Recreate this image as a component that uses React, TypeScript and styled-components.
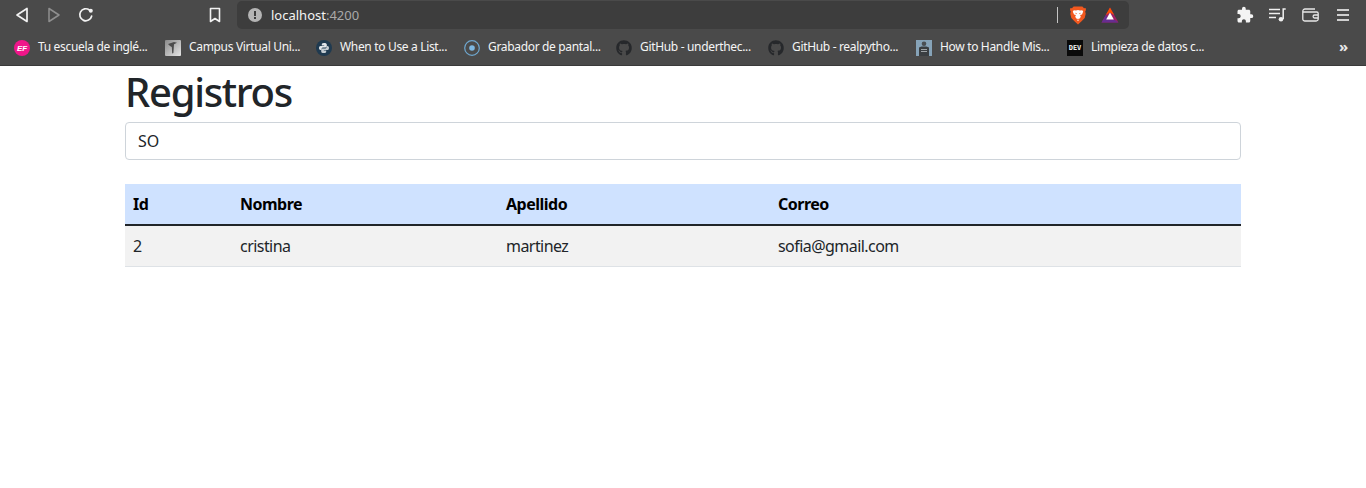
import React from 'react';
import styled, { createGlobalStyle } from 'styled-components';
import { FaGithub } from 'react-icons/fa';
import { MdExtension } from 'react-icons/md';

const GlobalStyle = createGlobalStyle`
    html, body {
        margin: 0;
        padding: 0;
        background: #fff;
    }
    body {
        font-family: "Noto Sans", "Open Sans", sans-serif;
        color: #212529;
    }
`;

const BackIcon = () => (
    <svg width="14" height="16" viewBox="0 0 14 16" fill="none" stroke="currentColor" strokeWidth="1.7" strokeLinejoin="round">
        <path d="M12 1.5v13L2 8z" />
    </svg>
);

const ForwardIcon = () => (
    <svg width="14" height="16" viewBox="0 0 14 16" fill="none" stroke="currentColor" strokeWidth="1.5" strokeLinejoin="round">
        <path d="M2 1.5v13L12 8z" />
    </svg>
);

const ReloadIcon = () => (
    <svg width="16" height="16" viewBox="0 0 16 16" fill="none" stroke="currentColor" strokeWidth="1.7" strokeLinecap="round">
        <path d="M13.6 9.2A6 6 0 1 1 11.4 3" />
        <circle cx="12.8" cy="3.7" r="2" fill="currentColor" stroke="none" />
    </svg>
);

const BookmarkIcon = () => (
    <svg width="12" height="16" viewBox="0 0 12 16" fill="none" stroke="currentColor" strokeWidth="1.6" strokeLinejoin="round">
        <path d="M1.5 1.500h9v13L6 11.500l-4.500 3z" />
    </svg>
);

const AlertIcon = () => (
    <svg width="14" height="14" viewBox="0 0 14 14">
        <circle cx="7" cy="7" r="7" fill="#b5b5b5" />
        <rect x="6" y="3" width="2" height="5" fill="#3d3d3d" />
        <rect x="6" y="9" width="2" height="2" fill="#3d3d3d" />
    </svg>
);

const BraveIcon = () => (
    <svg width="16" height="19" viewBox="0 0 16 19">
        <path d="M3.600 0.600h8.800l1.600 1.600 1.600-.3.400 2.200-.8 1.500.5 2.200-1 4.200-3.400 3.400L8 18.600l-3.300-3.200-3.400-3.400-1-4.200.5-2.200-.8-1.500.4-2.200 1.600.3z" fill="#f1581f" />
        <path d="M3.800 4.200l2.200.3 2-.5 2 .5 2.200-.3 1 1.400-1.200 2.800-1.900.6.700 1.800-1.100 1.600L8 13l-1.700-.6-1.100-1.600.7-1.800-1.900-.6-1.200-2.800z" fill="#fff" />
        <path d="M6.700 13.800h2.600L8 15z" fill="#fff" />
        <path d="M5 6.800l1.800.5-.4 1zM11 6.800l-1.800.5.400 1z" fill="#f1581f" />
    </svg>
);

const BatIcon = () => (
    <svg width="18" height="16" viewBox="0 0 18 16">
        <polygon points="9,0.500 17.500,15.500 0.500,15.500" fill="#9e1f63" />
        <polygon points="9,0.500 13.200,8 9,5.500 4.800,8" fill="#ff5000" />
        <polygon points="0.500,15.500 4.800,8 9,12.500 13.200,12.500 17.500,15.500" fill="#662d91" />
        <polygon points="9,5.500 12.800,12.500 5.200,12.500" fill="#fff" />
    </svg>
);

const PlaylistIcon = () => (
    <svg width="17" height="14" viewBox="0 0 17 14" fill="none" stroke="#f0f0f0" strokeWidth="1.5">
        <path d="M0 1.500h11M0 5.500h11M0 9.500h7" />
        <path d="M14.200 11V1h2.500" />
        <circle cx="12" cy="11.200" r="2.300" fill="#f0f0f0" stroke="none" />
    </svg>
);

const WalletIcon = () => (
    <svg width="17" height="14" viewBox="0 0 17 14" fill="none" stroke="#e8e8e8" strokeWidth="1.3">
        <path d="M13 1H3a2.200 2.200 0 0 0-2.200 2.200v8A2 2 0 0 0 3 13h11.200a2 2 0 0 0 2-2V5.400a1.400 1.400 0 0 0-1.400-1.400H1.400" />
        <path d="M16 7h-3.400a1.500 1.500 0 0 0 0 3H16" />
    </svg>
);

const MenuIcon = () => (
    <svg width="13" height="13" viewBox="0 0 13 13" fill="#d0d0d0">
        <rect y="0" width="12" height="2" />
        <rect y="5" width="12" height="2" />
        <rect y="10" width="12" height="2" />
    </svg>
);

const EfIcon = () => (
    <svg width="16" height="16" viewBox="0 0 16 16">
        <circle cx="8" cy="8" r="8" fill="#f0168a" />
        <text x="8" y="10.800" textAnchor="middle" fontSize="8" fontWeight="800" fontStyle="italic" fill="#fff" fontFamily="Liberation Sans, sans-serif">EF</text>
    </svg>
);

const CampusIcon = () => (
    <svg width="16" height="16" viewBox="0 0 16 16">
        <defs>
            <linearGradient id="campusBg" x1="0" y1="0" x2="1" y2="1">
                <stop offset="0" stopColor="#8a8a8a" />
                <stop offset="1" stopColor="#e6e6e6" />
            </linearGradient>
        </defs>
        <rect width="16" height="16" rx="1" fill="url(#campusBg)" />
        <path d="M3 4l6-2 3 .8-3 1.400-.6 8.800-1.200.6-.4-6.600L5 6z" fill="#4c4c4c" />
    </svg>
);

const PythonIcon = () => (
    <svg width="16" height="16" viewBox="0 0 16 16">
        <circle cx="8" cy="8" r="8" fill="#1f3a50" />
        <path d="M8 3C6 3 5.800 3.800 5.800 4.600v1h2.400V6H4.600C3.600 6 3 6.900 3 8.100s.6 2 1.600 2h.9V9c0-.9.8-1.600 1.700-1.600h2.200c.8 0 1.400-.6 1.400-1.300V4.600C10.800 3.700 10 3 8 3z" fill="#e2e6ea" />
        <path d="M8 13c2 0 2.200-.8 2.200-1.600v-1H7.800V10h3.600c1 0 1.600-.9 1.600-2.100s-.6-2-1.600-2h-.9V7c0 .9-.8 1.600-1.700 1.600H6.600c-.8 0-1.400.6-1.400 1.300v1.500C5.200 12.300 6 13 8 13z" fill="#c4ccd2" />
    </svg>
);

const RecorderIcon = () => (
    <svg width="16" height="16" viewBox="0 0 16 16" fill="none">
        <circle cx="8" cy="8" r="7.300" stroke="#6fa8d0" strokeWidth="1.200" />
        <circle cx="8" cy="8" r="2.800" fill="#7db8e2" />
    </svg>
);

const ArticleIcon = () => (
    <svg width="16" height="16" viewBox="0 0 16 16">
        <rect width="16" height="16" fill="#86a3b8" />
        <circle cx="8" cy="3.800" r="2.300" fill="#4a4f53" />
        <path d="M3 16V7.500L5.500 6.500h5L13 7.500V16z" fill="#3a3e41" />
        <rect x="5" y="9" width="6" height="1" fill="#9ea3a6" />
        <rect x="5" y="11" width="6" height="1" fill="#9ea3a6" />
    </svg>
);

const DevIcon = () => <DevBadge>DEV</DevBadge>;

const GithubIcon = () => <FaGithub size={16} color="#26282b" />;

const bookmarks = [
    { label: 'Tu escuela de inglé...', icon: <EfIcon />, width: 151 },
    { label: 'Campus Virtual Uni...', icon: <CampusIcon />, width: 151 },
    { label: 'When to Use a List...', icon: <PythonIcon />, width: 148 },
    { label: 'Grabador de pantal...', icon: <RecorderIcon />, width: 152 },
    { label: 'GitHub - underthec...', icon: <GithubIcon />, width: 152 },
    { label: 'GitHub - realpytho...', icon: <GithubIcon />, width: 148 },
    { label: 'How to Handle Mis...', icon: <ArticleIcon />, width: 151 },
    { label: 'Limpieza de datos c...', icon: <DevIcon />, width: 151 },
];

const App = () => {
    return (
        <>
            <GlobalStyle />
            <Browser>
                <Toolbar>
                    <NavButton><BackIcon /></NavButton>
                    <NavButton $disabled><ForwardIcon /></NavButton>
                    <NavButton><ReloadIcon /></NavButton>
                    <BookmarkButton><BookmarkIcon /></BookmarkButton>
                    <AddressBar>
                        <AlertIcon />
                        <Url>localhost<UrlPort>:4200</UrlPort></Url>
                        <Divider />
                        <ShieldSlot><BraveIcon /></ShieldSlot>
                        <RewardSlot><BatIcon /></RewardSlot>
                    </AddressBar>
                    <ExtensionButton><MdExtension size={18} color="#f4f4f4" /></ExtensionButton>
                    <ExtensionButton><PlaylistIcon /></ExtensionButton>
                    <ExtensionButton><WalletIcon /></ExtensionButton>
                    <ExtensionButton><MenuIcon /></ExtensionButton>
                </Toolbar>
                <BookmarksBar>
                    {bookmarks.map((item) => (
                        <Bookmark key={item.label} $width={item.width}>
                            {item.icon}
                            <BookmarkLabel>{item.label}</BookmarkLabel>
                        </Bookmark>
                    ))}
                    <MoreBookmarks>»</MoreBookmarks>
                </BookmarksBar>
            </Browser>
            <Container>
                <Title>Registros</Title>
                <SearchInput type="text" defaultValue="SO" />
                <Table>
                    <colgroup>
                        <col width={107} />
                        <col width={266} />
                        <col width={272} />
                        <col />
                    </colgroup>
                    <thead>
                        <tr>
                            <HeadCell>Id</HeadCell>
                            <HeadCell>Nombre</HeadCell>
                            <HeadCell>Apellido</HeadCell>
                            <HeadCell>Correo</HeadCell>
                        </tr>
                    </thead>
                    <tbody>
                        <tr>
                            <BodyCell>2</BodyCell>
                            <BodyCell>cristina</BodyCell>
                            <BodyCell>martinez</BodyCell>
                            <BodyCell>sofia@gmail.com</BodyCell>
                        </tr>
                    </tbody>
                </Table>
            </Container>
        </>
    );
};

const Browser = styled.header`
    background: #4a4a4a;
    height: 66px;
    box-sizing: border-box;
    border-bottom: 1px solid #3a3a3a;
`;
const Toolbar = styled.div`
    display: flex;
    align-items: center;
    height: 30px;
    padding-left: 6px;
`;
const NavButton = styled.div<{ $disabled?: boolean }>`
    display: flex;
    align-items: center;
    justify-content: center;
    width: 32px;
    height: 28px;
    color: ${(props) => (props.$disabled ? '#8f8f8f' : '#f2f2f2')};
`;
const BookmarkButton = styled(NavButton)`
    margin-left: 97px;
`;
const AddressBar = styled.div`
    display: flex;
    align-items: center;
    width: 892px;
    height: 28px;
    margin-left: 6px;
    margin-right: 99px;
    box-sizing: border-box;
    padding-left: 11px;
    background: #3d3d3d;
    border-radius: 5px;
`;
const Url = styled.span`
    flex: 1;
    margin-left: 9px;
    font-size: 13px;
    color: #f4f4f4;
`;
const UrlPort = styled.span`
    color: #a9a9a9;
`;
const Divider = styled.div`
    width: 1px;
    height: 16px;
    background: #c4c4c4;
`;
const ShieldSlot = styled.div`
    display: flex;
    margin-left: 12px;
`;
const RewardSlot = styled.div`
    display: flex;
    margin-left: 15px;
    margin-right: 10px;
`;
const ExtensionButton = styled.div`
    display: flex;
    align-items: center;
    justify-content: center;
    width: 33px;
    height: 28px;
`;
const BookmarksBar = styled.nav`
    display: flex;
    align-items: center;
    height: 35px;
    padding-left: 14px;
`;
const Bookmark = styled.div<{ $width: number }>`
    display: flex;
    align-items: center;
    gap: 8px;
    width: ${(props) => props.$width}px;
    flex-shrink: 0;
    font-size: 12px;
    color: #f5f5f5;
    white-space: nowrap;
`;
const BookmarkLabel = styled.span`
    padding-bottom: 2px;
    letter-spacing: -0.33px;
`;
const DevBadge = styled.div`
    width: 16px;
    height: 16px;
    flex-shrink: 0;
    background: #0a0a0a;
    color: #f0f0f0;
    font-family: "DejaVu Sans Mono", monospace;
    font-size: 7px;
    font-weight: 700;
    line-height: 16px;
    text-align: center;
`;
const MoreBookmarks = styled.div`
    margin-left: 121px;
    padding-bottom: 2px;
    font-size: 15px;
    font-weight: 700;
    color: #e8e8e8;
    line-height: 15px;
`;
const Container = styled.main`
    width: 1116px;
    margin: 0 auto;
`;
const Title = styled.h1`
    margin: 0 0 4px;
    font-size: 40px;
    font-weight: 500;
    line-height: 52px;
    letter-spacing: -1.3px;
    color: #212529;
`;
const SearchInput = styled.input`
    display: block;
    width: 100%;
    height: 38px;
    box-sizing: border-box;
    padding: 6px 12px;
    margin-bottom: 24px;
    border: 1px solid #ced4da;
    border-radius: 4px;
    background: #fff;
    font-family: inherit;
    font-size: 16px;
    color: #212529;
    outline: none;
`;
const Table = styled.table`
    width: 100%;
    table-layout: fixed;
    border-collapse: collapse;
`;
const HeadCell = styled.th`
    height: 40px;
    box-sizing: border-box;
    padding: 8px;
    background: #cfe2ff;
    border-bottom: 2px solid #212529;
    color: #000;
    font-size: 16px;
    font-weight: 700;
    line-height: 24px;
    letter-spacing: -0.5px;
    text-align: left;
`;
const BodyCell = styled.td`
    height: 40px;
    box-sizing: border-box;
    padding: 8px;
    background: #f2f2f2;
    border-bottom: 1px solid #dee2e6;
    font-size: 16px;
    line-height: 24px;
    letter-spacing: -0.55px;
    color: #212529;
`;

export default App;
